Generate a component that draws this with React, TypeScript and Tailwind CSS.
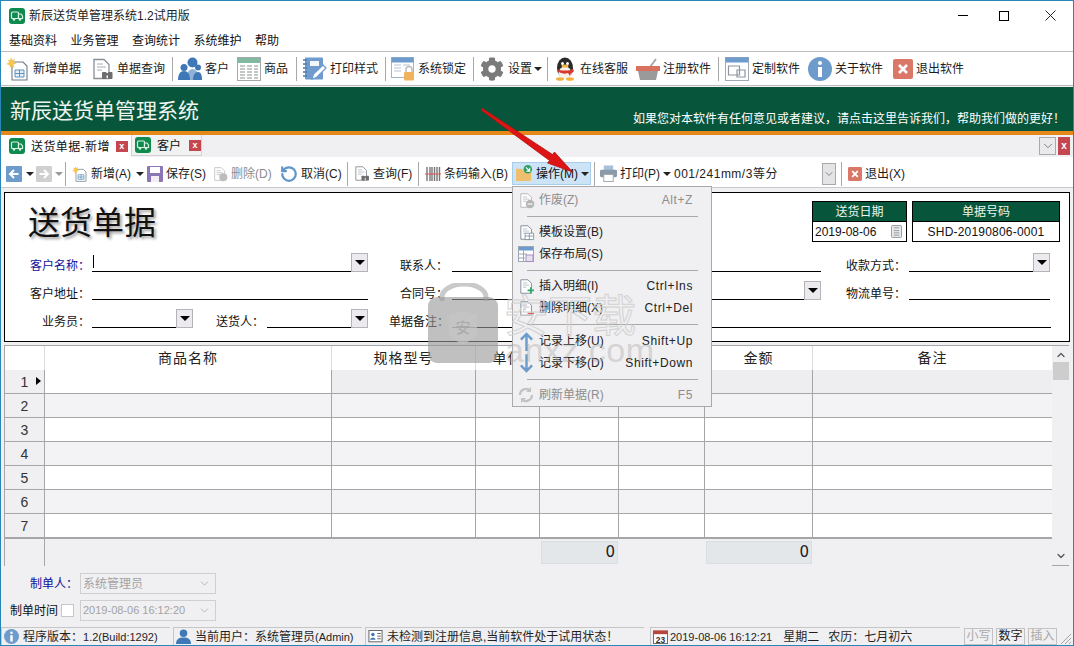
import type { ReactNode } from "react"
import { ChevronDown, ChevronUp, RotateCcw } from "lucide-react"
import { FaCog } from "react-icons/fa"

const FONT = "font-['Liberation_Sans','Noto_Sans_CJK_SC',sans-serif]"

function Truck() {
  return (
    <svg viewBox="0 0 16 16" className="h-[16px] w-[16px] shrink-0">
      <rect x="0" y="0" width="16" height="16" rx="3" fill="#0f8a4f" />
      <rect x="2.5" y="4" width="7" height="6.5" rx="1" fill="#0f8a4f" stroke="#d9f0e2" strokeWidth="1.2" />
      <path d="M9.5 6h2.5l1.5 2v2.5h-4z" fill="#0f8a4f" stroke="#d9f0e2" strokeWidth="1.2" />
      <circle cx="5" cy="11.5" r="1.2" fill="#d9f0e2" />
      <circle cx="11" cy="11.5" r="1.2" fill="#d9f0e2" />
    </svg>
  )
}

function Doc({ size = 24, stroke = "#8a8f96", children }: { size?: number; stroke?: string; children?: ReactNode }) {
  return (
    <svg viewBox="0 0 24 24" width={size} height={size}>
      <path d="M4 2.5h10l5 5v14H4z" fill="#fff" stroke={stroke} strokeWidth="1.3" />
      <path d="M7 7h6M7 10h9M7 13h5" stroke="#a8adb3" strokeWidth="1" />
      {children}
    </svg>
  )
}

function NewDoc({ size = 24 }: { size?: number }) {
  return (
    <svg viewBox="0 0 24 24" width={size} height={size}>
      <path d="M6 5h11l4 4v14H6z" fill="#fff" stroke="#6f7a84" strokeWidth="1.1" />
      <path d="M9 13h9v7H9zM9 16.500h9M13.500 13v7" fill="#e6f0f8" stroke="#5f93bd" strokeWidth="1" />
      <path d="M5 0l1 3 3-1-1.500 3 3 1.500-3 1 1 3-3-1.500L4 11l-.5-3L0 7l3-1.500L2 2.500l2 1z" fill="#f4c64f" />
    </svg>
  )
}

function Search({ size = 24 }: { size?: number }) {
  return (
    <Doc size={size}>
      <rect x="12" y="15" width="4.500" height="7" rx="1" fill="#6d6d6d" />
      <rect x="18" y="15" width="4.500" height="7" rx="1" fill="#6d6d6d" />
      <rect x="15" y="16" width="4" height="2.500" fill="#6d6d6d" />
    </Doc>
  )
}

function Users() {
  return (
    <svg viewBox="0 0 24 24" width="24" height="24">
      <circle cx="14.500" cy="5.500" r="5" fill="#3f78b6" />
      <path d="M8 23c0-7 3-11 6.500-11S21 16 21 23z" fill="#8fb2d6" />
      <circle cx="6" cy="10.500" r="3.500" fill="#3f78b6" />
      <path d="M0 23c0-6 2.500-9 6-9s6 3 6 9z" fill="#3f78b6" />
      <circle cx="20" cy="10.500" r="3" fill="#3f78b6" />
      <path d="M15 23c0-5 2-8 5-8s4 3 4 8z" fill="#3f78b6" />
    </svg>
  )
}

function Sheet() {
  return (
    <svg viewBox="0 0 24 24" width="24" height="24">
      <rect x="0.500" y="0.500" width="23" height="23" fill="#fff" stroke="#a5a8a8" />
      <rect x="1" y="1" width="22" height="5" fill="#82b9a1" />
      <path d="M3 9h5M3 12h5M3 15h5M3 18h5M3 21h5M10 9h5M10 12h5M10 15h5M10 18h5M10 21h5M17 9h4M17 12h4M17 15h4M17 18h4M17 21h4" stroke="#8b8f90" strokeWidth="1.200" />
    </svg>
  )
}

function Notebook() {
  return (
    <svg viewBox="0 0 24 24" width="24" height="24">
      <rect x="2" y="0.500" width="18" height="22" rx="1" fill="#6f9bcf" />
      <path d="M0 3h4M0 7h4M0 11h4M0 15h4M0 19h4" stroke="#4e79ab" strokeWidth="1.500" />
      <rect x="7" y="4" width="9" height="5" fill="#f2f6fb" />
      <path d="M9 22l1.500-5L20 8l3 3-9.500 9.500z" fill="#fff" stroke="#6f9bcf" strokeWidth="1.300" />
    </svg>
  )
}

function LockWindow() {
  return (
    <svg viewBox="0 0 24 24" width="24" height="24">
      <rect x="0.500" y="0.500" width="22" height="20" fill="#fff" stroke="#9eb6cc" />
      <rect x="0.500" y="0.500" width="22" height="5" fill="#6d9ccc" />
      <path d="M3 8h7M3 11h7M3 14h7M12 8h7" stroke="#b7c6d4" />
      <path d="M15 15v-2.500a3 3 0 016 0V15" fill="none" stroke="#bdbdbd" strokeWidth="1.500" />
      <rect x="13" y="15" width="10" height="8.500" rx="1" fill="#eeb35c" />
    </svg>
  )
}

function Penguin() {
  return (
    <svg viewBox="0 0 24 24" width="24" height="24">
      <ellipse cx="12" cy="11" rx="8" ry="10.500" fill="#2a2a2a" />
      <ellipse cx="12" cy="16" rx="6.500" ry="6.500" fill="#f6f1ea" />
      <circle cx="9.500" cy="6.500" r="1.500" fill="#fff" />
      <circle cx="14.500" cy="6.500" r="1.500" fill="#fff" />
      <ellipse cx="12" cy="9" rx="3.500" ry="1.500" fill="#efb23c" />
      <path d="M4 12c4 2 12 2 16 0l1 2c-1 1-2 2-3 2l-1 3-2-3c-3 1-6 1-8-.5C5 15 4 14 4 12z" fill="#d8382c" />
      <ellipse cx="7" cy="22" rx="4" ry="1.800" fill="#efb23c" />
      <ellipse cx="17" cy="22" rx="4" ry="1.800" fill="#efb23c" />
    </svg>
  )
}

function Basket() {
  return (
    <svg viewBox="0 0 24 24" width="24" height="24">
      <path d="M14 10l6-8" stroke="#a5a5a5" strokeWidth="1.800" />
      <rect x="0" y="9" width="24" height="5" fill="#d9715f" />
      <path d="M2 14h20l-2 9H4z" fill="#9a9a9a" />
    </svg>
  )
}

function AppWindow() {
  return (
    <svg viewBox="0 0 24 24" width="24" height="24">
      <rect x="0.500" y="0.500" width="23" height="23" fill="#fff" stroke="#9eaab5" />
      <rect x="0.500" y="0.500" width="23" height="5" fill="#6d9ccc" />
      <path d="M3.500 9h11v9h-11zM12 13h8v7h-8z" fill="#fff" stroke="#8c96a0" strokeWidth="1.200" />
    </svg>
  )
}

function Info({ size = 24 }: { size?: number }) {
  return (
    <svg viewBox="0 0 24 24" width={size} height={size}>
      <circle cx="12" cy="12" r="12" fill="#6d9bcb" />
      <circle cx="12" cy="6" r="2" fill="#fff" />
      <rect x="10" y="10" width="4" height="10" fill="#fff" />
    </svg>
  )
}

function ExitBox({ size = 20 }: { size?: number }) {
  return (
    <svg viewBox="0 0 20 20" width={size} height={size}>
      <rect width="20" height="20" rx="2" fill="#da7767" />
      <path d="M6 6l8 8M14 6l-8 8" stroke="#fff" strokeWidth="2.600" />
    </svg>
  )
}

function NavBox({ dir, on }: { dir: "left" | "right"; on?: boolean }) {
  return (
    <svg viewBox="0 0 16 16" width="16" height="16">
      <rect width="16" height="16" rx="1" fill={on ? "#6d9ccc" : "#d0d0d0"} />
      <path d={dir === "left" ? "M12.500 8h-8M8 4L4 8l4 4" : "M3.500 8h8M8 4l4 4-4 4"} fill="none" stroke="#fff" strokeWidth="2" />
    </svg>
  )
}

function Save() {
  return (
    <svg viewBox="0 0 16 16" width="16" height="16">
      <rect width="16" height="16" rx="1" fill="#8c77b6" />
      <rect x="3" y="1" width="10" height="6" fill="#fff" />
      <rect x="4" y="10" width="8" height="6" fill="#f1eef6" />
    </svg>
  )
}

function Barcode() {
  return (
    <svg viewBox="0 0 16 16" width="16" height="16">
      <path d="M2 1v14M5 1v14M7 1v14M9.500 1v14M12 1v14M14.500 1v14" stroke="#777" strokeWidth="1.400" />
      <path d="M0 8h16" stroke="#d9534f" strokeWidth="1" />
    </svg>
  )
}

function Folder() {
  return (
    <svg viewBox="0 0 18 18" width="17" height="17">
      <path d="M0 4h6l2 2h8v11H0z" fill="#eec06d" />
      <circle cx="12.500" cy="4.500" r="4.500" fill="#2f9e66" />
      <path d="M10.500 2.500l3.500 3.500M14.500 3v3.500H11" fill="none" stroke="#fff" strokeWidth="1.200" />
    </svg>
  )
}

function Printer() {
  return (
    <svg viewBox="0 0 18 18" width="17" height="17">
      <rect x="4" y="0.500" width="10" height="5" fill="#a9c1d8" />
      <rect x="0" y="5" width="18" height="8" rx="1.500" fill="#8a9aa8" />
      <rect x="4" y="10" width="10" height="7.500" fill="#fff" stroke="#a0a7ad" />
    </svg>
  )
}

function Caret({ w, on = true }: { w?: string; on?: boolean }) {
  return (
    <div className={`flex shrink-0 items-center ${w ?? ""}`}>
      <span className={`block h-0 w-0 border-x-[4px] border-t-[4px] border-x-transparent ${on ? "border-t-[#222]" : "border-t-[#9a9a9a]"}`} />
    </div>
  )
}

function Sep({ w }: { w: string }) {
  return (
    <div className={`flex shrink-0 items-center ${w}`}>
      <span className="block h-[24px] w-px bg-[#a9a9a9]" />
    </div>
  )
}

function ToolBtn({ w, icon, label, dim }: { w: string; icon: ReactNode; label?: string; dim?: boolean }) {
  return (
    <div className={`flex shrink-0 items-center ${w}`}>
      <span className="flex shrink-0 items-center">{icon}</span>
      {label && <span className={`ml-[3px] whitespace-nowrap ${dim ? "text-[#8c8c8c]" : "text-[#1c1c1c]"}`}>{label}</span>}
    </div>
  )
}

function DropBtn() {
  return (
    <span className="flex h-[19px] w-[17px] items-center justify-center border border-[#b4b4b4] bg-[#eceaee]">
      <span className="block h-0 w-0 border-x-[5px] border-t-[5px] border-x-transparent border-t-black" />
    </span>
  )
}

function Field({ label, labelW, lineW, blue, drop, caret }: { label: string; labelW: string; lineW: string; blue?: boolean; drop?: boolean; caret?: boolean }) {
  return (
    <>
      <div className={`shrink-0 whitespace-nowrap text-right ${labelW} ${blue ? "text-[#10109a]" : "text-[#111]"}`}>{label}</div>
      <div className={`ml-[2px] flex h-[19px] shrink-0 items-start justify-between border-b border-black ${lineW}`}>
        {caret ? <span className="ml-px mt-[2px] block h-[13px] w-px bg-black" /> : <span />}
        {drop && <DropBtn />}
      </div>
    </>
  )
}

function GridCell({ w, bg, last }: { w: string; bg: string; last?: boolean }) {
  return <div className={`${w} ${bg} ${last ? "" : "border-r border-[#a6a6a6]"}`} />
}

function GridRow({ n, alt, selected }: { n: number; alt: boolean; selected?: boolean }) {
  const bg = alt ? "bg-[#f3f2f5]" : "bg-white"
  const rest = selected ? "bg-[#eeedf0]" : bg
  return (
    <div className="flex h-[24px] border-b border-[#a6a6a6]">
      <div className="relative flex w-[40px] items-center justify-center border-r border-[#a6a6a6] bg-[#f0eff1] text-[14px] text-[#333]">
        {n}
        {selected && <span className="absolute left-[31px] top-[7px] h-0 w-0 border-y-[4px] border-l-[5px] border-y-transparent border-l-black" />}
      </div>
      <GridCell w="w-[287px]" bg={bg} />
      <GridCell w="w-[144px]" bg={rest} />
      <GridCell w="w-[64px]" bg={rest} />
      <GridCell w="w-[79px]" bg={rest} />
      <GridCell w="w-[86px]" bg={rest} />
      <GridCell w="w-[108px]" bg={rest} />
      <GridCell w="w-[239px]" bg={rest} last />
    </div>
  )
}

function HeadCell({ w, label }: { w: string; label: string }) {
  return (
    <div className={`flex items-center justify-center border-r border-[#dcdcdc] text-[14px] tracking-[1px] text-[#222] ${w}`}>{label}</div>
  )
}

function MenuItem({ icon, label, keys, dim }: { icon: ReactNode; label: string; keys?: string; dim?: boolean }) {
  return (
    <div className={`flex h-[22px] items-center pl-[4px] pr-[18px] ${dim ? "text-[#8d8d8d]" : "text-[#222]"}`}>
      <span className="flex w-[18px] shrink-0 justify-center">{icon}</span>
      <span className="ml-[4px] flex-1 whitespace-nowrap">{label}</span>
      {keys && <span className="whitespace-nowrap text-[12px] tracking-[0.6px]">{keys}</span>}
    </div>
  )
}

function MenuSep({ h }: { h: string }) {
  return (
    <div className={`flex items-center pl-[14px] pr-[13px] ${h}`}>
      <div className="h-px w-full bg-[#a9a9a9]" />
    </div>
  )
}

function BottomCombo({ text, small }: { text: string; small?: boolean }) {
  return (
    <div className={`flex h-[21px] w-[136px] items-center justify-between border border-[#cfcfd2] pl-[2px] pr-[4px] text-[#a3a3a3] ${small ? "text-[11px]" : ""}`}>
      <span className="whitespace-nowrap">{text}</span>
      <ChevronDown size={13} strokeWidth={1.2} color="#9c9c9c" />
    </div>
  )
}

function StatusCell({ w, icon, children }: { w: string; icon: ReactNode; children: ReactNode }) {
  return (
    <div className={`flex h-full shrink-0 items-center gap-[4px] whitespace-nowrap border-l border-t border-[#c6c6c6] pl-[2px] text-[#1f1f1f] ${w}`}>
      {icon}
      {children}
    </div>
  )
}

function KeyCell({ label, on }: { label: string; on?: boolean }) {
  return (
    <div className={`flex h-[17px] w-[29px] items-center justify-center border border-[#c2c2c2] ${on ? "text-[#222]" : "text-[#a8a8a8]"}`}>{label}</div>
  )
}

function Calendar() {
  return (
    <svg viewBox="0 0 16 16" width="15" height="15">
      <rect x="0.500" y="2.500" width="15" height="13" fill="#fff" stroke="#666" />
      <rect x="0" y="1.500" width="16" height="4" fill="#b5473d" />
      <text x="8" y="14.500" fontSize="9" textAnchor="middle" fontWeight="700" fill="#333">23</text>
    </svg>
  )
}

export default function App() {
  return (
    <div className={`relative flex h-[646px] w-[1074px] flex-col overflow-hidden border border-[#2a85b8] bg-[#f0eff1] text-[12px] leading-none ${FONT}`}>
      {/* title */}
      <div className="flex h-[29px] shrink-0 items-center bg-white pl-[8px] text-[#222]">
        <Truck />
        <span className="ml-[4px] flex-1">新辰送货单管理系统1.2试用版</span>
        <div className="flex items-center pr-[17px]">
          <span className="block h-px w-[10px] bg-black" />
          <span className="ml-[31px] block h-[10px] w-[10px] border border-black" />
          <svg viewBox="0 0 11 11" width="11" height="11" className="ml-[36px]">
            <path d="M0.500 0.500l10 10M10.500 0.500l-10 10" stroke="#222" />
          </svg>
        </div>
      </div>

      {/* menu bar */}
      <div className="flex h-[21px] shrink-0 items-center gap-[13.5px] bg-white pl-[8px] pt-px text-[#111]">
        <span>基础资料</span>
        <span>业务管理</span>
        <span>查询统计</span>
        <span>系统维护</span>
        <span>帮助</span>
      </div>

      {/* main toolbar */}
      <div className="flex h-[35px] shrink-0 items-center border-y border-[#bdbdbd] bg-white pl-[5px] pt-px">
        <ToolBtn w="w-[84px]" icon={<NewDoc />} label="新增单据" />
        <ToolBtn w="w-[82px]" icon={<Search />} label="单据查询" />
        <Sep w="w-[6px]" />
        <ToolBtn w="w-[59px]" icon={<Users />} label="客户" />
        <ToolBtn w="w-[59px]" icon={<Sheet />} label="商品" />
        <Sep w="w-[7px]" />
        <ToolBtn w="w-[82px]" icon={<Notebook />} label="打印样式" />
        <Sep w="w-[6px]" />
        <ToolBtn w="w-[82px]" icon={<LockWindow />} label="系统锁定" />
        <Sep w="w-[7px]" />
        <div className="flex w-[67px] shrink-0 items-center">
          <FaCog size={24} color="#7b7b7b" />
          <span className="ml-[4px] whitespace-nowrap text-[#1c1c1c]">设置</span>
          <Caret w="ml-[2px]" />
        </div>
        <Sep w="w-[6px]" />
        <ToolBtn w="w-[83px]" icon={<Penguin />} label="在线客服" />
        <ToolBtn w="w-[82px]" icon={<Basket />} label="注册软件" />
        <Sep w="w-[7px]" />
        <ToolBtn w="w-[83px]" icon={<AppWindow />} label="定制软件" />
        <ToolBtn w="w-[85px]" icon={<Info />} label="关于软件" />
        <ToolBtn w="w-[80px]" icon={<ExitBox />} label="退出软件" />
      </div>

      {/* banner */}
      <div className="mt-px flex h-[44px] shrink-0 justify-between bg-[#07553a] pl-[9px] pr-[8px] text-[#eef5f0]">
        <span className="mt-[13px] text-[21px]">新辰送货单管理系统</span>
        <span className="mt-[26px] text-[12px] text-white">如果您对本软件有任何意见或者建议，请点击这里告诉我们，帮助我们做的更好！</span>
      </div>
      <div className="h-[4px] shrink-0 bg-[#e6871a]" />

      {/* tabs */}
      <div className="flex h-[22px] shrink-0 items-start bg-[#f0eff1]">
        <div className="flex h-[22px] w-[130px] items-center bg-white pl-[8px]">
          <Truck />
          <span className="ml-[6px] whitespace-nowrap pt-px tracking-[0.4px] text-[#111]">送货单据-新增</span>
          <span className="ml-[6px] flex h-[11px] w-[12px] items-center justify-center bg-[#c4474f] text-[9px] font-bold text-white">x</span>
        </div>
        <div className="flex h-[21px] w-[71px] items-center border-x border-b border-[#d2d2d2] bg-[#f0f1f1] pl-[3px]">
          <Truck />
          <span className="ml-[6px] pt-px text-[#111]">客户</span>
          <span className="ml-[8px] flex h-[11px] w-[12px] items-center justify-center bg-[#c4474f] text-[9px] font-bold text-white">x</span>
        </div>
        <div className="flex-1" />
        <div className="mr-[2px] mt-[2px] flex h-[18px] w-[17px] items-center justify-center border border-[#a9a9a9] bg-[#eaeaec]">
          <ChevronDown size={14} strokeWidth={1.2} color="#555" />
        </div>
        <div className="mr-[3px] mt-[2px] flex h-[18px] w-[12px] items-center justify-center bg-[#c4474f] text-[10px] font-bold text-white">x</div>
      </div>

      {/* edit toolbar */}
      <div className="flex h-[31px] shrink-0 items-center border-b border-[#c9c9c9] bg-white pl-[5px] pt-[3px]">
        <ToolBtn w="w-[20px]" icon={<NavBox dir="left" on />} />
        <Caret w="w-[10px]" />
        <ToolBtn w="w-[19px]" icon={<NavBox dir="right" />} />
        <Caret w="w-[10px]" on={false} />
        <Sep w="w-[7px]" />
        <ToolBtn w="w-[64px]" icon={<NewDoc size={16} />} label="新增(A)" />
        <Caret w="w-[11px]" />
        <ToolBtn w="w-[65px]" icon={<Save />} label="保存(S)" />
        <ToolBtn w="w-[68px]" dim icon={<Doc size={16} stroke="#c2c2c2"><circle cx="17" cy="17" r="6" fill="#bdbdbd" /></Doc>} label="删除(D)" />
        <ToolBtn w="w-[67px]" icon={<RotateCcw size={18} strokeWidth={3} color="#5f97c9" />} label="取消(C)" />
        <Sep w="w-[6px]" />
        <ToolBtn w="w-[65px]" icon={<Search size={17} />} label="查询(F)" />
        <Sep w="w-[7px]" />
        <ToolBtn w="w-[87px]" icon={<Barcode />} label="条码输入(B)" />
        <div className="flex h-[23px] w-[79px] shrink-0 items-center border border-[#a6cdec] bg-[#cde4f7] pl-[3px]">
          <Folder />
          <span className="ml-[3px] whitespace-nowrap text-[#111]">操作(M)</span>
          <Caret w="ml-[3px]" />
        </div>
        <Sep w="ml-[3px] w-[6px]" />
        <ToolBtn w="w-[63px]" icon={<Printer />} label="打印(P)" />
        <Caret w="w-[9px]" />
        <div className="flex h-[23px] w-[164px] shrink-0 items-center justify-between text-[#222]">
          <span className="ml-[2px] tracking-[0.5px]">001/241mm/3等分</span>
          <span className="flex h-[22px] w-[14px] items-center justify-center border border-[#a9a9a9] bg-[#e4e4e6]">
            <ChevronDown size={12} strokeWidth={1.2} color="#444" />
          </span>
        </div>
        <Sep w="ml-[5px] w-[7px]" />
        <ToolBtn w="w-[60px]" icon={<ExitBox size={14} />} label="退出(X)" />
      </div>

      {/* form */}
      <div className="ml-[3px] mt-[4px] h-[150px] w-[1066px] shrink-0 border border-black bg-white">
        <div className="flex h-[51px] justify-between pr-[9px]">
          <div className="ml-[23px] mt-[12px] text-[32px] leading-[36px] text-[#111] [text-shadow:2px_2px_3px_#999]">送货单据</div>
          <div className="mt-[8px] flex gap-[5px]">
            <div className="h-[41px] w-[95px] border border-black">
              <div className="flex h-[19px] items-center justify-center bg-[#07553a] text-[#eef5f0]">送货日期</div>
              <div className="flex h-[20px] items-center justify-between border-t border-black pl-[2px] pr-[4px] text-[#111]">
                2019-08-06
                <svg viewBox="0 0 12 14" width="11" height="13">
                  <rect x="0.500" y="0.500" width="11" height="13" rx="1" fill="#e8eaec" stroke="#8d949a" />
                  <path d="M3 3h6M3 6h6M3 8.500h6M3 11h6" stroke="#8d949a" />
                </svg>
              </div>
            </div>
            <div className="h-[41px] w-[148px] border border-black">
              <div className="flex h-[19px] items-center justify-center bg-[#07553a] text-[#eef5f0]">单据号码</div>
              <div className="flex h-[20px] items-center justify-center border-t border-black tracking-[0.2px] text-[#111]">SHD-20190806-0001</div>
            </div>
          </div>
        </div>
        <div className="flex h-[28px] items-end">
          <Field label="客户名称：" labelW="w-[85px]" lineW="w-[276px]" blue drop caret />
          <Field label="联系人：" labelW="w-[82px] pr-[2px]" lineW="w-[369px]" />
          <Field label="收款方式：" labelW="w-[86px] pr-px" lineW="w-[141px]" drop />
        </div>
        <div className="flex h-[28px] items-end">
          <Field label="客户地址：" labelW="w-[85px]" lineW="w-[276px]" />
          <Field label="合同号：" labelW="w-[82px] pr-[2px]" lineW="w-[369px]" drop />
          <Field label="物流单号：" labelW="w-[86px] pr-px" lineW="w-[141px]" />
        </div>
        <div className="flex h-[28px] items-end">
          <Field label="业务员：" labelW="w-[85px]" lineW="w-[101px]" drop />
          <Field label="送货人：" labelW="w-[72px] pr-px" lineW="w-[101px]" drop />
          <Field label="单据备注：" labelW="w-[82px] pr-px" lineW="w-[599px]" />
        </div>
      </div>

      {/* grid */}
      <div className="ml-[3px] mt-[3px] flex h-[221px] w-[1065px] shrink-0 border-y border-l border-y-[#a6a6a6] border-l-[#a6a6a6]">
        <div className="w-[1047px] shrink-0">
          <div className="flex h-[24px] bg-white">
            <div className="w-[40px] border-r border-[#dcdcdc]" />
            <HeadCell w="w-[287px]" label="商品名称" />
            <HeadCell w="w-[144px]" label="规格型号" />
            <HeadCell w="w-[64px]" label="单位" />
            <HeadCell w="w-[79px]" label="数量" />
            <HeadCell w="w-[86px]" label="单价" />
            <HeadCell w="w-[108px]" label="金额" />
            <div className="flex w-[239px] items-center justify-center text-[14px] tracking-[1px] text-[#222]">备注</div>
          </div>
          <GridRow n={1} alt={false} selected />
          <GridRow n={2} alt />
          <GridRow n={3} alt={false} />
          <GridRow n={4} alt />
          <GridRow n={5} alt={false} />
          <GridRow n={6} alt />
          <GridRow n={7} alt={false} />
          <div className="flex h-[28px] border-t border-[#a6a6a6] bg-[#f0eff1]">
            <div className="w-[40px] border-r border-[#a6a6a6]" />
            <div className="w-[496px]" />
            <div className="my-[2px] flex w-[77px] items-center justify-end border border-[#dbdee0] bg-[#e4e7e9] pr-[2px] font-['DejaVu_Sans'] text-[15px] text-[#222]">0</div>
            <div className="w-[88px]" />
            <div className="my-[2px] flex w-[106px] items-center justify-end border border-[#dbdee0] bg-[#e4e7e9] pr-[2px] font-['DejaVu_Sans'] text-[15px] text-[#222]">0</div>
          </div>
        </div>
        <div className="flex w-[17px] shrink-0 flex-col items-center justify-between bg-[#f0eff1] py-[3px]">
          <div className="flex w-full flex-col items-center">
            <ChevronUp size={12} strokeWidth={2.5} color="#555" />
            <div className="mt-[1px] h-[18px] w-[16px] bg-[#cdcdcd]" />
          </div>
          <ChevronDown size={12} strokeWidth={2.5} color="#555" />
        </div>
      </div>

      {/* footer fields */}
      <div className="flex flex-1 flex-col gap-[6px] pt-[7px]">
        <div className="flex items-center">
          <div className="flex w-[79px] justify-end pr-[2px] text-[#10109a]">制单人：</div>
          <BottomCombo text="系统管理员" />
        </div>
        <div className="flex items-center">
          <div className="flex w-[79px] items-center justify-end pr-[6px] text-[#111]">
            制单时间
            <span className="ml-[3px] block h-[13px] w-[13px] border border-[#c6c6c6] bg-white" />
          </div>
          <BottomCombo small text="2019-08-06 16:12:20" />
        </div>
      </div>

      {/* status bar */}
      <div className="flex h-[18px] shrink-0 items-center">
        <StatusCell w="mr-[3px] w-[169px]" icon={<Info size={15} />}>
          <span>程序版本：<span className="text-[11px]">1.2(Build:1292)</span></span>
        </StatusCell>
        <StatusCell w="mr-[3px] w-[189px]" icon={<svg viewBox="0 0 16 16" width="15" height="15"><circle cx="8" cy="4.500" r="4" fill="#3f78b6" /><path d="M0 16c0-5 3-7 8-7s8 2 8 7z" fill="#3f78b6" /></svg>}>
          <span>当前用户：系统管理员<span className="text-[11px]">(Admin)</span></span>
        </StatusCell>
        <StatusCell w="mr-[6px] w-[279px]" icon={<svg viewBox="0 0 16 16" width="15" height="14"><rect x="0.500" y="0.500" width="15" height="13" fill="#fff" stroke="#555" /><circle cx="5" cy="5" r="2" fill="#3f78b6" /><path d="M2 11c0-3 6-3 6 0z" fill="#3f78b6" /><path d="M10 4h4M10 7h4M10 10h4" stroke="#555" /></svg>}>未检测到注册信息,当前软件处于试用状态！</StatusCell>
        <StatusCell w="mr-[4px] w-[310px]" icon={<Calendar />}>
          <span className="-ml-[2px]"><span className="text-[11px]">2019-08-06 16:12:21</span><span className="ml-[11px]">星期二</span><span className="ml-[9px]">农历：七月初六</span></span>
        </StatusCell>
        <div className="flex gap-[3px]">
          <KeyCell label="小写" />
          <KeyCell label="数字" on />
          <KeyCell label="插入" />
        </div>
        <svg viewBox="0 0 12 12" width="12" height="12" className="ml-[3px] mt-[6px]">
          <path d="M11 1L1 11M11 5l-6 6M11 9l-2 2" stroke="#a5a5a5" />
        </svg>
      </div>

      {/* watermark bag */}
      <svg viewBox="0 0 72 81" width="72" height="81" className="pointer-events-none absolute left-[427px] top-[282px]">
        <path d="M14 18V14a22 13 0 0144 0v4" fill="none" stroke="#a5a5a5" strokeOpacity="0.6" strokeWidth="5" />
        <rect x="0" y="14" width="70" height="66" rx="9" fill="#999999" fillOpacity="0.62" />
        <path d="M21 32l14-4 14 4v16c0 6-8 11-14 13-6-2-14-7-14-13z" fill="#c6c6c6" fillOpacity="0.7" />
        <text x="35" y="50" fontSize="15" textAnchor="middle" fill="#a9a9a9">安</text>
      </svg>

      {/* 操作 dropdown */}
      <div className="absolute left-[511px] top-[185px] h-[221px] w-[200px] border border-[#a9a9a9] bg-[#f0eff1] pt-[2px]">
        <MenuItem dim label="作废(Z)" keys="Alt+Z" icon={<Doc size={17} stroke="#b5b5b5"><circle cx="17" cy="17" r="6" fill="#b5b5b5" /><path d="M13.500 17h7" stroke="#fff" strokeWidth="1.600" /></Doc>} />
        <MenuSep h="h-[10px]" />
        <MenuItem label="模板设置(B)" icon={<Doc size={17} stroke="#7c8a97"><path d="M10 13h12v9H10zM10 17h12M16 13v9" fill="#fff" stroke="#6b7f92" /></Doc>} />
        <MenuItem label="保存布局(S)" icon={<svg viewBox="0 0 16 16" width="16" height="16"><rect x="0.500" y="0.500" width="15" height="15" fill="#fff" stroke="#9aa8b5" /><rect x="1" y="1" width="14" height="3.500" fill="#6d9ccc" /><path d="M5.500 4v11M1 8h8M1 12h6" stroke="#9aa8b5" /><rect x="8" y="9" width="7" height="6.500" fill="#e7def0" stroke="#a78fc0" /></svg>} />
        <MenuSep h="h-[10px]" />
        <MenuItem label="插入明细(I)" keys="Ctrl+Ins" icon={<Doc size={17} stroke="#7c8a97"><path d="M18 13v9M13.500 17.500h9" stroke="#35a56d" strokeWidth="2.200" /></Doc>} />
        <MenuItem label="删除明细(X)" keys="Ctrl+Del" icon={<Doc size={17} stroke="#7c8a97"><path d="M13.500 19h9" stroke="#d9605a" strokeWidth="2.200" /></Doc>} />
        <MenuSep h="h-[11px]" />
        <MenuItem label="记录上移(U)" keys="Shift+Up" icon={<svg viewBox="0 0 16 20" width="15" height="19"><path d="M8 20V3M2 8l6-6 6 6" fill="none" stroke="#6d9ccc" strokeWidth="2.600" /></svg>} />
        <MenuItem label="记录下移(D)" keys="Shift+Down" icon={<svg viewBox="0 0 16 20" width="15" height="19"><path d="M8 0v17M2 12l6 6 6-6" fill="none" stroke="#6d9ccc" strokeWidth="2.600" /></svg>} />
        <MenuSep h="h-[10px]" />
        <MenuItem dim label="刷新单据(R)" keys="F5" icon={<svg viewBox="0 0 16 16" width="16" height="16"><path d="M2 8a6 6 0 0110.500-4M14 8a6 6 0 01-10.500 4" fill="none" stroke="#c2c2c2" strokeWidth="2.200" /><path d="M13 0v5H8M3 16v-5h5" fill="#c2c2c2" /></svg>} />
      </div>

      {/* watermark text */}
      <div className="pointer-events-none absolute left-[503px] top-[293px] text-[44px] leading-[46px] text-transparent [-webkit-text-stroke:1px_#d2d2d2]">安下载</div>
      <div className="pointer-events-none absolute left-[504px] top-[331px] text-[34px] leading-[36px] tracking-[0.5px] text-[#a8a8a8]/40">anxz.com</div>

      {/* red arrow */}
      <svg viewBox="0 0 1074 646" width="1074" height="646" className="pointer-events-none absolute left-[-1px] top-[-1px]">
        <path d="M481 110l1.500-1.500 70 46 2-2.500 18 20-25-9 2-2.500z" fill="#dd1515" stroke="#b51212" strokeWidth="0.800" />
      </svg>
    </div>
  )
}
